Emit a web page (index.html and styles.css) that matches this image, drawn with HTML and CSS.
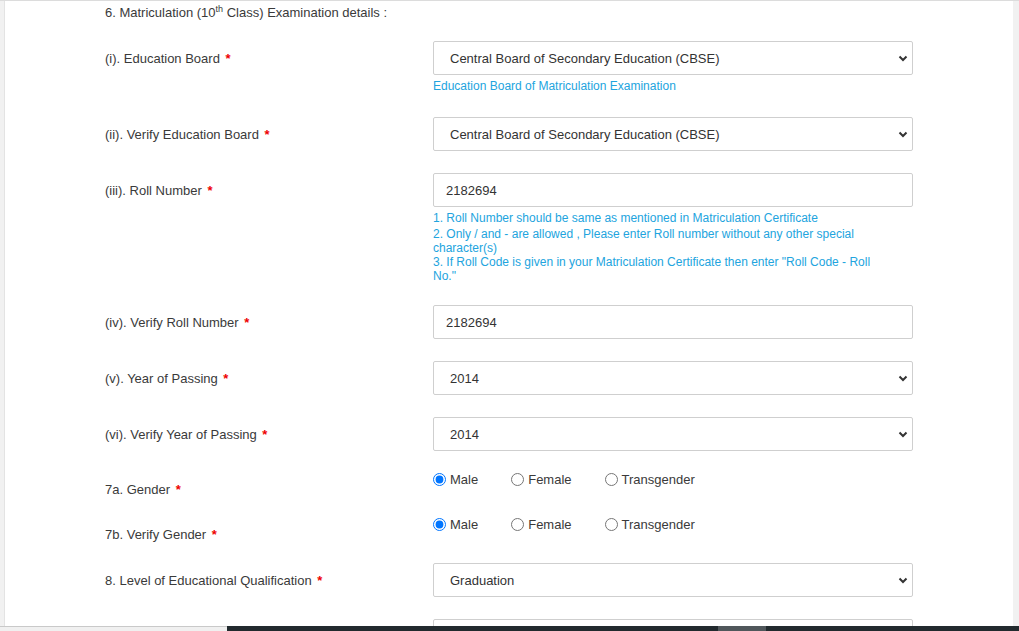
FILE: index.html
```html
<!DOCTYPE html>
<html lang="en">
<head>
    <meta charset="UTF-8">
    <meta name="viewport" content="width=device-width, initial-scale=1.0">
    <title>Matriculation Examination Details</title>
    <link rel="stylesheet" href="styles.css">
</head>
<body>
    <div class="panel">
        <form class="form">
            <div class="section-title">6. Matriculation (10<sup>th</sup> Class) Examination details :</div>

            <div class="form-row">
                <label class="form-label">(i). Education Board <span class="req">*</span></label>
                <div class="form-field">
                    <div class="select-wrap">
                        <select class="control">
                            <option>Central Board of Secondary Education (CBSE)</option>
                        </select>
                        <svg class="chevron" width="10" height="7" viewBox="0 0 10 7"><path d="M1.5 1.5l3.5 3.5 3.5-3.5" fill="none" stroke="#333" stroke-width="2"/></svg>
                    </div>
                    <div class="help">Education Board of Matriculation Examination</div>
                </div>
            </div>

            <div class="form-row">
                <label class="form-label">(ii). Verify Education Board <span class="req">*</span></label>
                <div class="form-field">
                    <div class="select-wrap">
                        <select class="control">
                            <option>Central Board of Secondary Education (CBSE)</option>
                        </select>
                        <svg class="chevron" width="10" height="7" viewBox="0 0 10 7"><path d="M1.5 1.5l3.5 3.5 3.5-3.5" fill="none" stroke="#333" stroke-width="2"/></svg>
                    </div>
                </div>
            </div>

            <div class="form-row">
                <label class="form-label">(iii). Roll Number <span class="req">*</span></label>
                <div class="form-field">
                    <input class="control control-text" type="text" value="2182694">
                    <div class="help help-list">
                        <div class="help-item">1. Roll Number should be same as mentioned in Matriculation Certificate</div>
                        <div>2. Only / and - are allowed , Please enter Roll number without any other special character(s)</div>
                        <div>3. If Roll Code is given in your Matriculation Certificate then enter "Roll Code - Roll No."</div>
                    </div>
                </div>
            </div>

            <div class="form-row">
                <label class="form-label">(iv). Verify Roll Number <span class="req">*</span></label>
                <div class="form-field">
                    <input class="control control-text" type="text" value="2182694">
                </div>
            </div>

            <div class="form-row">
                <label class="form-label">(v). Year of Passing <span class="req">*</span></label>
                <div class="form-field">
                    <div class="select-wrap">
                        <select class="control">
                            <option>2014</option>
                        </select>
                        <svg class="chevron" width="10" height="7" viewBox="0 0 10 7"><path d="M1.5 1.5l3.5 3.5 3.5-3.5" fill="none" stroke="#333" stroke-width="2"/></svg>
                    </div>
                </div>
            </div>

            <div class="form-row">
                <label class="form-label">(vi). Verify Year of Passing <span class="req">*</span></label>
                <div class="form-field">
                    <div class="select-wrap">
                        <select class="control">
                            <option>2014</option>
                        </select>
                        <svg class="chevron" width="10" height="7" viewBox="0 0 10 7"><path d="M1.5 1.5l3.5 3.5 3.5-3.5" fill="none" stroke="#333" stroke-width="2"/></svg>
                    </div>
                </div>
            </div>

            <div class="form-row form-row-radio">
                <label class="form-label">7a. Gender <span class="req">*</span></label>
                <div class="form-field radio-group">
                    <label class="radio"><input type="radio" name="gender" checked> Male</label>
                    <label class="radio"><input type="radio" name="gender"> Female</label>
                    <label class="radio"><input type="radio" name="gender"> Transgender</label>
                </div>
            </div>

            <div class="form-row form-row-radio">
                <label class="form-label">7b. Verify Gender <span class="req">*</span></label>
                <div class="form-field radio-group">
                    <label class="radio"><input type="radio" name="gender2" checked> Male</label>
                    <label class="radio"><input type="radio" name="gender2"> Female</label>
                    <label class="radio"><input type="radio" name="gender2"> Transgender</label>
                </div>
            </div>

            <div class="form-row">
                <label class="form-label">8. Level of Educational Qualification <span class="req">*</span></label>
                <div class="form-field">
                    <div class="select-wrap">
                        <select class="control">
                            <option>Graduation</option>
                        </select>
                        <svg class="chevron" width="10" height="7" viewBox="0 0 10 7"><path d="M1.5 1.5l3.5 3.5 3.5-3.5" fill="none" stroke="#333" stroke-width="2"/></svg>
                    </div>
                </div>
            </div>

            <div class="form-row">
                <label class="form-label"></label>
                <div class="form-field">
                    <div class="select-wrap">
                        <select class="control">
                            <option></option>
                        </select>
                    </div>
                </div>
            </div>
        </form>
    </div>

    <div class="bottom-bar">
        <div class="bottom-left"></div>
        <div class="bottom-track"><div class="bottom-thumb"></div></div>
    </div>
</body>
</html>
```

FILE: styles.css
```css
* {
    margin: 0;
    padding: 0;
    box-sizing: border-box;
}

html, body {
    height: 100%;
    overflow: hidden;
}

body {
    font-family: 'Liberation Sans', Arial, sans-serif;
    font-size: 13px;
    color: #3a3a3a;
    background: #f1f1f1;
    border-top: 1px solid #dcdcdc;
}

.panel {
    margin-left: 4px;
    width: 1009px;
    background: #fff;
    border-left: 1px solid #e3e3e3;
    padding: 2px 0 0 100px;
    min-height: 700px;
}

.form {
    display: flex;
    flex-direction: column;
}

.section-title {
    line-height: 20px;
    margin-bottom: 18px;
}

.section-title sup {
    font-size: 9px;
    line-height: 0;
    vertical-align: 5px;
}

.form-row {
    display: flex;
    margin-bottom: 22px;
}

.form-label {
    width: 328px;
    flex-shrink: 0;
    line-height: 32px;
    padding-top: 2px;
}

.req {
    color: #e00;
    font-weight: bold;
    margin-left: 2px;
}

.form-field {
    width: 480px;
}

.select-wrap {
    position: relative;
}

.control {
    display: block;
    width: 480px;
    height: 34px;
    border: 1px solid #cfcfcf;
    border-radius: 2px;
    background: #fff;
    font-family: inherit;
    font-size: 13px;
    color: #333;
    padding: 0 30px 0 16px;
    -webkit-appearance: none;
    appearance: none;
    outline: none;
}

.control-text {
    padding-left: 12px;
}

.chevron {
    position: absolute;
    right: 5px;
    top: 14px;
    pointer-events: none;
}

.help {
    color: #22a4de;
    font-size: 12px;
    line-height: 14px;
    margin-top: 4px;
    padding-bottom: 2px;
}

.help-list {
    width: 445px;
    padding-bottom: 0;
}

.help-item {
    margin-bottom: 2px;
}

.form-row-radio {
    margin-top: -4px;
    margin-bottom: 18px;
}

.form-row-radio .form-label {
    line-height: 20px;
    padding-top: 11px;
}

.radio-group {
    display: flex;
    gap: 33px;
    height: 20px;
    align-items: center;
    padding-top: 1px;
}

.radio {
    display: flex;
    align-items: center;
    gap: 4px;
    line-height: 20px;
}

.radio input {
    width: 13px;
    height: 13px;
    margin: 0;
}

.bottom-bar {
    position: fixed;
    left: 0;
    right: 0;
    bottom: 0;
    height: 5px;
    display: flex;
}

.bottom-left {
    width: 227px;
    background: #f0f0f0;
    border-top: 1px solid #c9c9c9;
}

.bottom-track {
    flex: 1;
    background: #222a2e;
    padding-left: 491px;
}

.bottom-thumb {
    width: 48px;
    height: 100%;
    background: #50575b;
}
```
